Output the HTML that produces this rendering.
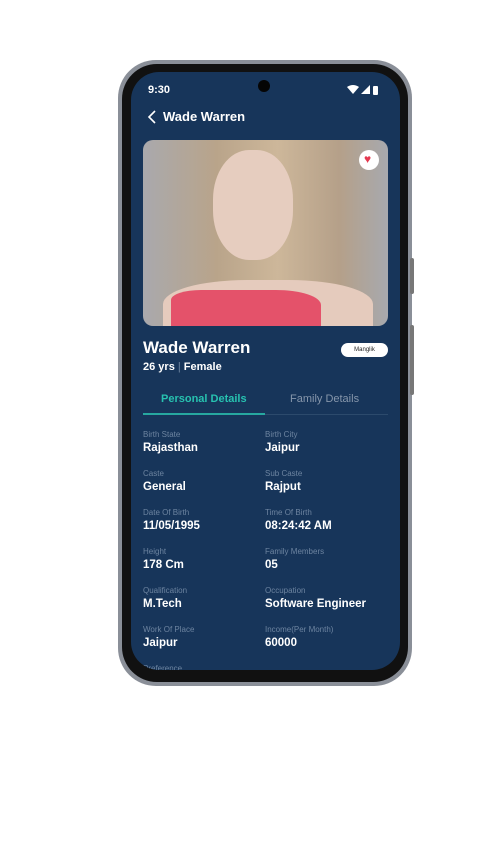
<!DOCTYPE html>
<html><head><style>
body{margin:0;width:500px;height:849px;background:#fff;position:relative;overflow:hidden;font-family:"Liberation Sans",sans-serif}
.abs{position:absolute}
.frame{left:118px;top:60px;width:294px;height:626px;border-radius:38px;background:#8a8f98;}
.bezel{left:122px;top:64px;width:286px;height:618px;border-radius:35px;background:#111;}
.screen{left:131px;top:72px;width:269px;height:598px;border-radius:28px;background:#17355a;overflow:hidden;color:#fff}
.lab{font-size:8px;color:#6d84a0;height:12px}
.val{font-size:11.5px;font-weight:bold;color:#fff}
.grid>div{height:39px}
</style></head><body>
<div class="abs frame"></div>
<div class="abs" style="left:410px;top:258px;width:4px;height:36px;background:#777;border-radius:2px"></div>
<div class="abs" style="left:410px;top:325px;width:4px;height:70px;background:#777;border-radius:2px"></div>
<div class="abs bezel"></div>
<div class="abs screen">
 <div class="abs" style="left:17px;top:12px;font-size:11px;font-weight:bold">9:30</div>
 <div class="abs" style="left:127px;top:8px;width:12px;height:12px;border-radius:50%;background:#050505"></div>
 <svg class="abs" style="left:215px;top:12px" width="32" height="12"><path d="M1 3 Q7 -1 13 3 L7 10Z" fill="#fff"/><path d="M15 10 L24 1 L24 10Z" fill="#fff"/><rect x="27" y="2" width="5" height="9" rx="1" fill="#fff"/></svg>
 <svg class="abs" style="left:16px;top:38px" width="10" height="14"><path d="M8 1 L2 7 L8 13" stroke="#fff" stroke-width="1.6" fill="none"/></svg>
 <div class="abs" style="left:32px;top:37px;font-size:13px;font-weight:bold">Wade Warren</div>
 <div class="abs" style="left:12px;top:68px;width:245px;height:186px;border-radius:10px;overflow:hidden;background:linear-gradient(90deg,#a9a9ad 0%,#b9a48a 30%,#cdb79a 55%,#b5a089 80%,#a7a9ae 100%)">
  <div class="abs" style="left:70px;top:10px;width:80px;height:110px;border-radius:45%;background:#e6cdbf"></div>
  <div class="abs" style="left:20px;top:140px;width:210px;height:60px;background:#e5cbbd;border-radius:40% 40% 0 0"></div>
  <div class="abs" style="left:28px;top:150px;width:150px;height:50px;background:#e4526a;border-radius:20% 30% 0 0"></div>
  <div class="abs" style="left:216px;top:10px;width:20px;height:20px;border-radius:50%;background:#fff"></div>
  <div class="abs" style="left:221px;top:12px;font-size:12px;color:#e53950">♥</div>
 </div>
 <div class="abs" style="left:12px;top:266px;font-size:17px;font-weight:bold">Wade Warren</div>
 <div class="abs" style="left:210px;top:271px;width:47px;height:14px;border-radius:8px;background:#fff;color:#222;font-size:6px;text-align:center;line-height:14px">Manglik</div>
 <div class="abs" style="left:12px;top:289px;font-size:11px;font-weight:bold">26 yrs <span style="color:#6d84a0;font-weight:normal">|</span> Female</div>
 <div class="abs" style="left:30px;top:321px;font-size:11px;font-weight:bold;color:#27c2b0">Personal Details</div>
 <div class="abs" style="left:159px;top:321px;font-size:11px;color:#8696ab">Family Details</div>
 <div class="abs" style="left:12px;top:342px;width:245px;height:1px;background:#2c4a6c"></div>
 <div class="abs" style="left:12px;top:341px;width:122px;height:2px;background:#27a8a0"></div>
 <div class="abs" style="left:12px;top:358px;width:250px">
  <div class="grid" style="display:grid;grid-template-columns:122px 122px">
   <div><div class="lab">Birth State</div><div class="val">Rajasthan</div></div><div><div class="lab">Birth City</div><div class="val">Jaipur</div></div>
   <div><div class="lab">Caste</div><div class="val">General</div></div><div><div class="lab">Sub Caste</div><div class="val">Rajput</div></div>
   <div><div class="lab">Date Of Birth</div><div class="val">11/05/1995</div></div><div><div class="lab">Time Of Birth</div><div class="val">08:24:42 AM</div></div>
   <div><div class="lab">Height</div><div class="val">178 Cm</div></div><div><div class="lab">Family Members</div><div class="val">05</div></div>
   <div><div class="lab">Qualification</div><div class="val">M.Tech</div></div><div><div class="lab">Occupation</div><div class="val">Software Engineer</div></div>
   <div><div class="lab">Work Of Place</div><div class="val">Jaipur</div></div><div><div class="lab">Income(Per Month)</div><div class="val">60000</div></div>
   <div><div class="lab">Preference</div></div>
  </div>
 </div>
</div>
</body></html>
